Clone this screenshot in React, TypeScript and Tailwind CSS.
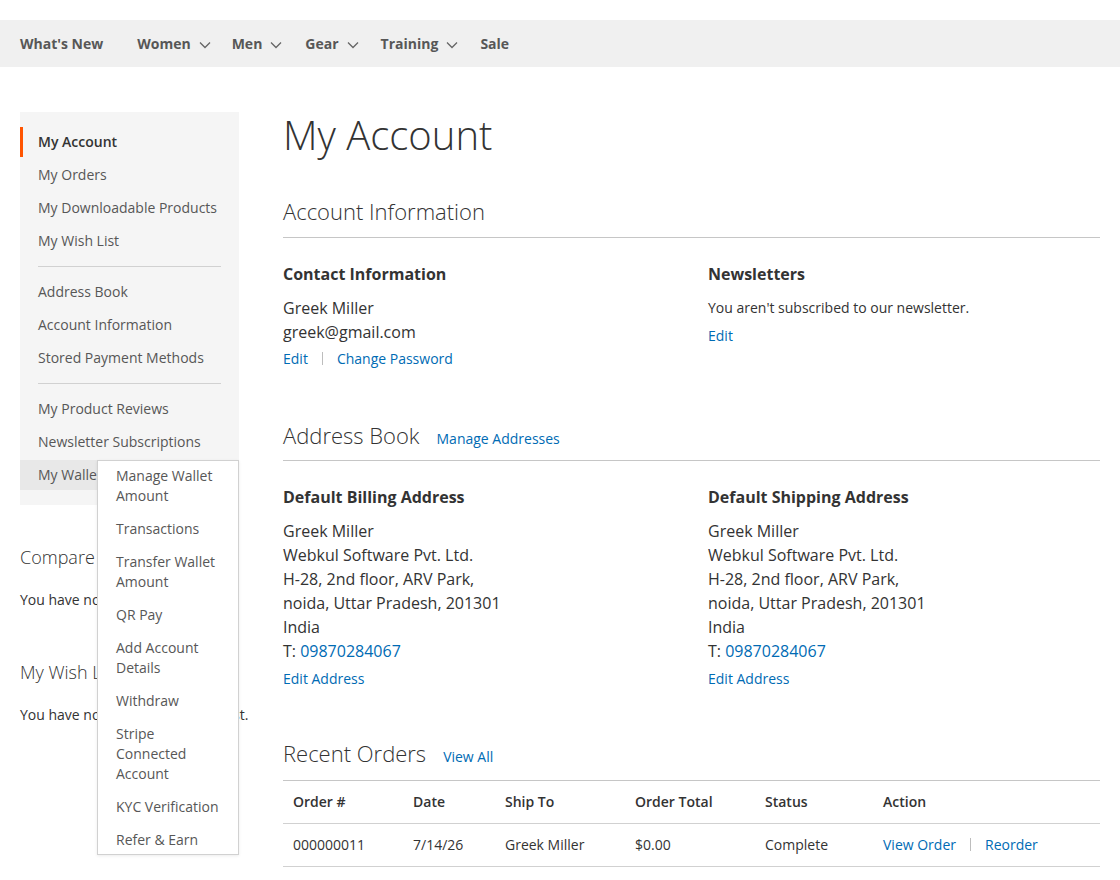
import React from "react";

const NAV = [
  { label: "What's New", sub: false, gap: "mr-[34px]" },
  { label: "Women", sub: true, gap: "mr-[21px]" },
  { label: "Men", sub: true, gap: "mr-[23px]" },
  { label: "Gear", sub: true, gap: "mr-[22px]" },
  { label: "Training", sub: true, gap: "mr-[22px]" },
  { label: "Sale", sub: false, gap: "" },
];

const WALLET = [
  "Manage Wallet Amount",
  "Transactions",
  "Transfer Wallet Amount",
  "QR Pay",
  "Add Account Details",
  "Withdraw",
  "Stripe Connected Account",
  "KYC Verification",
  "Refer & Earn",
];

const ADDRESS = [
  "Greek Miller",
  "Webkul Software Pvt. Ltd.",
  "H-28, 2nd floor, ARV Park,",
  "noida, Uttar Pradesh, 201301",
  "India",
];

function Chevron() {
  return (
    <svg width="12" height="8" viewBox="0 0 12 8" className="ml-[8px] mt-[2px]" aria-hidden="true">
      <path d="M1 1.5 L6 6.5 L11 1.5" fill="none" stroke="#666" strokeWidth="1.3" />
    </svg>
  );
}

function Pipe() {
  return <span className="inline-block w-px h-[13px] bg-[#bdbdbd] mx-[14px] align-[-1px]" />;
}

function NavItem({ label, current = false }: { label: string; current?: boolean }) {
  return (
    <li className="mt-[3px] first:mt-0">
      <span
        className={`block h-[30px] leading-[30px] border-l-[3px] pl-[15px] pr-[18px] ${
          current ? "border-[#ff5501] font-semibold text-[#333]" : "border-transparent text-[#575757]"
        }`}
      >
        {label}
      </span>
    </li>
  );
}

function Divider() {
  return <li className="h-px bg-[#d1d1d1] mx-[18px] my-[10px]" />;
}

// pb varies a little per block in the original page
function BlockTitle({ title, link, pb }: { title: string; link?: string; pb: string }) {
  return (
    <div className={`flex items-baseline border-b border-[#c6c6c6] ${pb}`}>
      <h2 className="text-[22px] leading-[28px] font-light text-[#333]">{title}</h2>
      {link && <a className="ml-[17px] text-[14px] text-[#006bb4]">{link}</a>}
    </div>
  );
}

function AddressBox({ title }: { title: string }) {
  return (
    <div>
      <h3 className="text-[16px] leading-[22px] font-bold text-[#333]">{title}</h3>
      <div className="mt-[11px] text-[16px] leading-[24px] text-[#333]">
        {ADDRESS.map((l) => (
          <div key={l}>{l}</div>
        ))}
        <div>
          T: <a className="text-[#006bb4]">09870284067</a>
        </div>
      </div>
      <a className="block mt-[6px] text-[14px] leading-[20px] text-[#006bb4]">Edit Address</a>
    </div>
  );
}

export default function App() {
  return (
    <div className="min-h-[880px] bg-white text-[#333] text-[14px]" style={{ fontFamily: '"Open Sans", "Noto Sans", sans-serif' }}>
      <div className="h-[20px]" />
      {/* Top navigation */}
      <nav className="h-[47px] bg-[#f0f0f0] px-[20px]">
        <ul className="flex items-center h-full text-[14px] font-bold text-[#575757]">
          {NAV.map((n) => (
            <li key={n.label} className={`flex items-center ${n.gap}`}>
              {n.label}
              {n.sub && <Chevron />}
            </li>
          ))}
        </ul>
      </nav>

      <div className="flex px-[20px] pt-[45px]">
        {/* Sidebar */}
        <aside className="w-[219px] shrink-0">
          <div className="bg-[#f5f5f5] py-[15px]">
            <ul className="text-[14px]">
              <NavItem label="My Account" current />
              <NavItem label="My Orders" />
              <NavItem label="My Downloadable Products" />
              <NavItem label="My Wish List" />
              <Divider />
              <NavItem label="Address Book" />
              <NavItem label="Account Information" />
              <NavItem label="Stored Payment Methods" />
              <Divider />
              <NavItem label="My Product Reviews" />
              <NavItem label="Newsletter Subscriptions" />
              <li className="relative mt-[3px] bg-[#e8e8e8]">
                <span className="block h-[30px] leading-[30px] pl-[18px] text-[#575757]">My Wallet</span>
                {/* wallet submenu, open on hover */}
                <ul className="absolute z-10 left-[77px] top-0 w-[142px] bg-white border border-[#d1d1d1] shadow-[0_1px_3px_rgba(0,0,0,0.08)] text-[#575757]">
                  {WALLET.map((w) => (
                    <li key={w} className="pl-[18px] pr-[14px] py-[6.5px] first:pt-[4.5px] last:pb-[4.5px] leading-[20px]">
                      {w}
                    </li>
                  ))}
                </ul>
              </li>
            </ul>
          </div>

          <div className="mt-[40px]">
            <h3 className="text-[18px] leading-[24px] font-light text-[#333]">Compare Products</h3>
            <p className="mt-[21px] leading-[20px] whitespace-nowrap">You have no items to compare.</p>
          </div>
          <div className="mt-[50px]">
            <h3 className="text-[18px] leading-[24px] font-light text-[#333]">My Wish List</h3>
            <p className="mt-[21px] leading-[20px] whitespace-nowrap">You have no items in your wish list.</p>
          </div>
        </aside>

        {/* Main */}
        <main className="ml-[44px] flex-1">
          <h1 className="mt-[1px] text-[40px] leading-[44px] font-light text-[#333]">My Account</h1>

          <section className="mt-[40px]">
            <BlockTitle title="Account Information" pb="pb-[12px]" />
            <div className="flex mt-[25px]">
              <div className="w-[425px]">
                <h3 className="text-[16px] leading-[22px] font-bold">Contact Information</h3>
                <div className="mt-[11px] text-[16px] leading-[24px]">
                  <div>Greek Miller</div>
                  <div>greek@gmail.com</div>
                </div>
                <div className="mt-[5px] leading-[20px] text-[#006bb4]">
                  <a>Edit</a>
                  <Pipe />
                  <a>Change Password</a>
                </div>
              </div>
              <div>
                <h3 className="text-[16px] leading-[22px] font-bold">Newsletters</h3>
                <p className="mt-[13px] leading-[20px]">You aren't subscribed to our newsletter.</p>
                <a className="block mt-[8px] leading-[20px] text-[#006bb4]">Edit</a>
              </div>
            </div>
          </section>

          <section className="mt-[52px]">
            <BlockTitle title="Address Book" link="Manage Addresses" pb="pb-[11px]" />
            <div className="flex mt-[25px]">
              <div className="w-[425px]">
                <AddressBox title="Default Billing Address" />
              </div>
              <AddressBox title="Default Shipping Address" />
            </div>
          </section>

          <section className="mt-[50px]">
            <BlockTitle title="Recent Orders" link="View All" pb="pb-[13px]" />
            <table className="w-full text-left text-[14px] leading-[20px]">
              <thead>
                <tr className="border-b border-[#d1d1d1]">
                  <th className="w-[120px] px-[10px] py-[11px] font-semibold">Order #</th>
                  <th className="w-[92px] px-[10px] py-[11px] font-semibold">Date</th>
                  <th className="w-[130px] px-[10px] py-[11px] font-semibold">Ship To</th>
                  <th className="w-[130px] px-[10px] py-[11px] font-semibold">Order Total</th>
                  <th className="w-[118px] px-[10px] py-[11px] font-semibold">Status</th>
                  <th className="px-[10px] py-[11px] font-semibold">Action</th>
                </tr>
              </thead>
              <tbody>
                <tr className="border-b border-[#d1d1d1]">
                  <td className="px-[10px] py-[11px]">000000011</td>
                  <td className="px-[10px] py-[11px]">7/14/26</td>
                  <td className="px-[10px] py-[11px]">Greek Miller</td>
                  <td className="px-[10px] py-[11px]">$0.00</td>
                  <td className="px-[10px] py-[11px]">Complete</td>
                  <td className="px-[10px] py-[11px] text-[#006bb4]">
                    <a>View Order</a>
                    <Pipe />
                    <a>Reorder</a>
                  </td>
                </tr>
              </tbody>
            </table>
          </section>
        </main>
      </div>
    </div>
  );
}
